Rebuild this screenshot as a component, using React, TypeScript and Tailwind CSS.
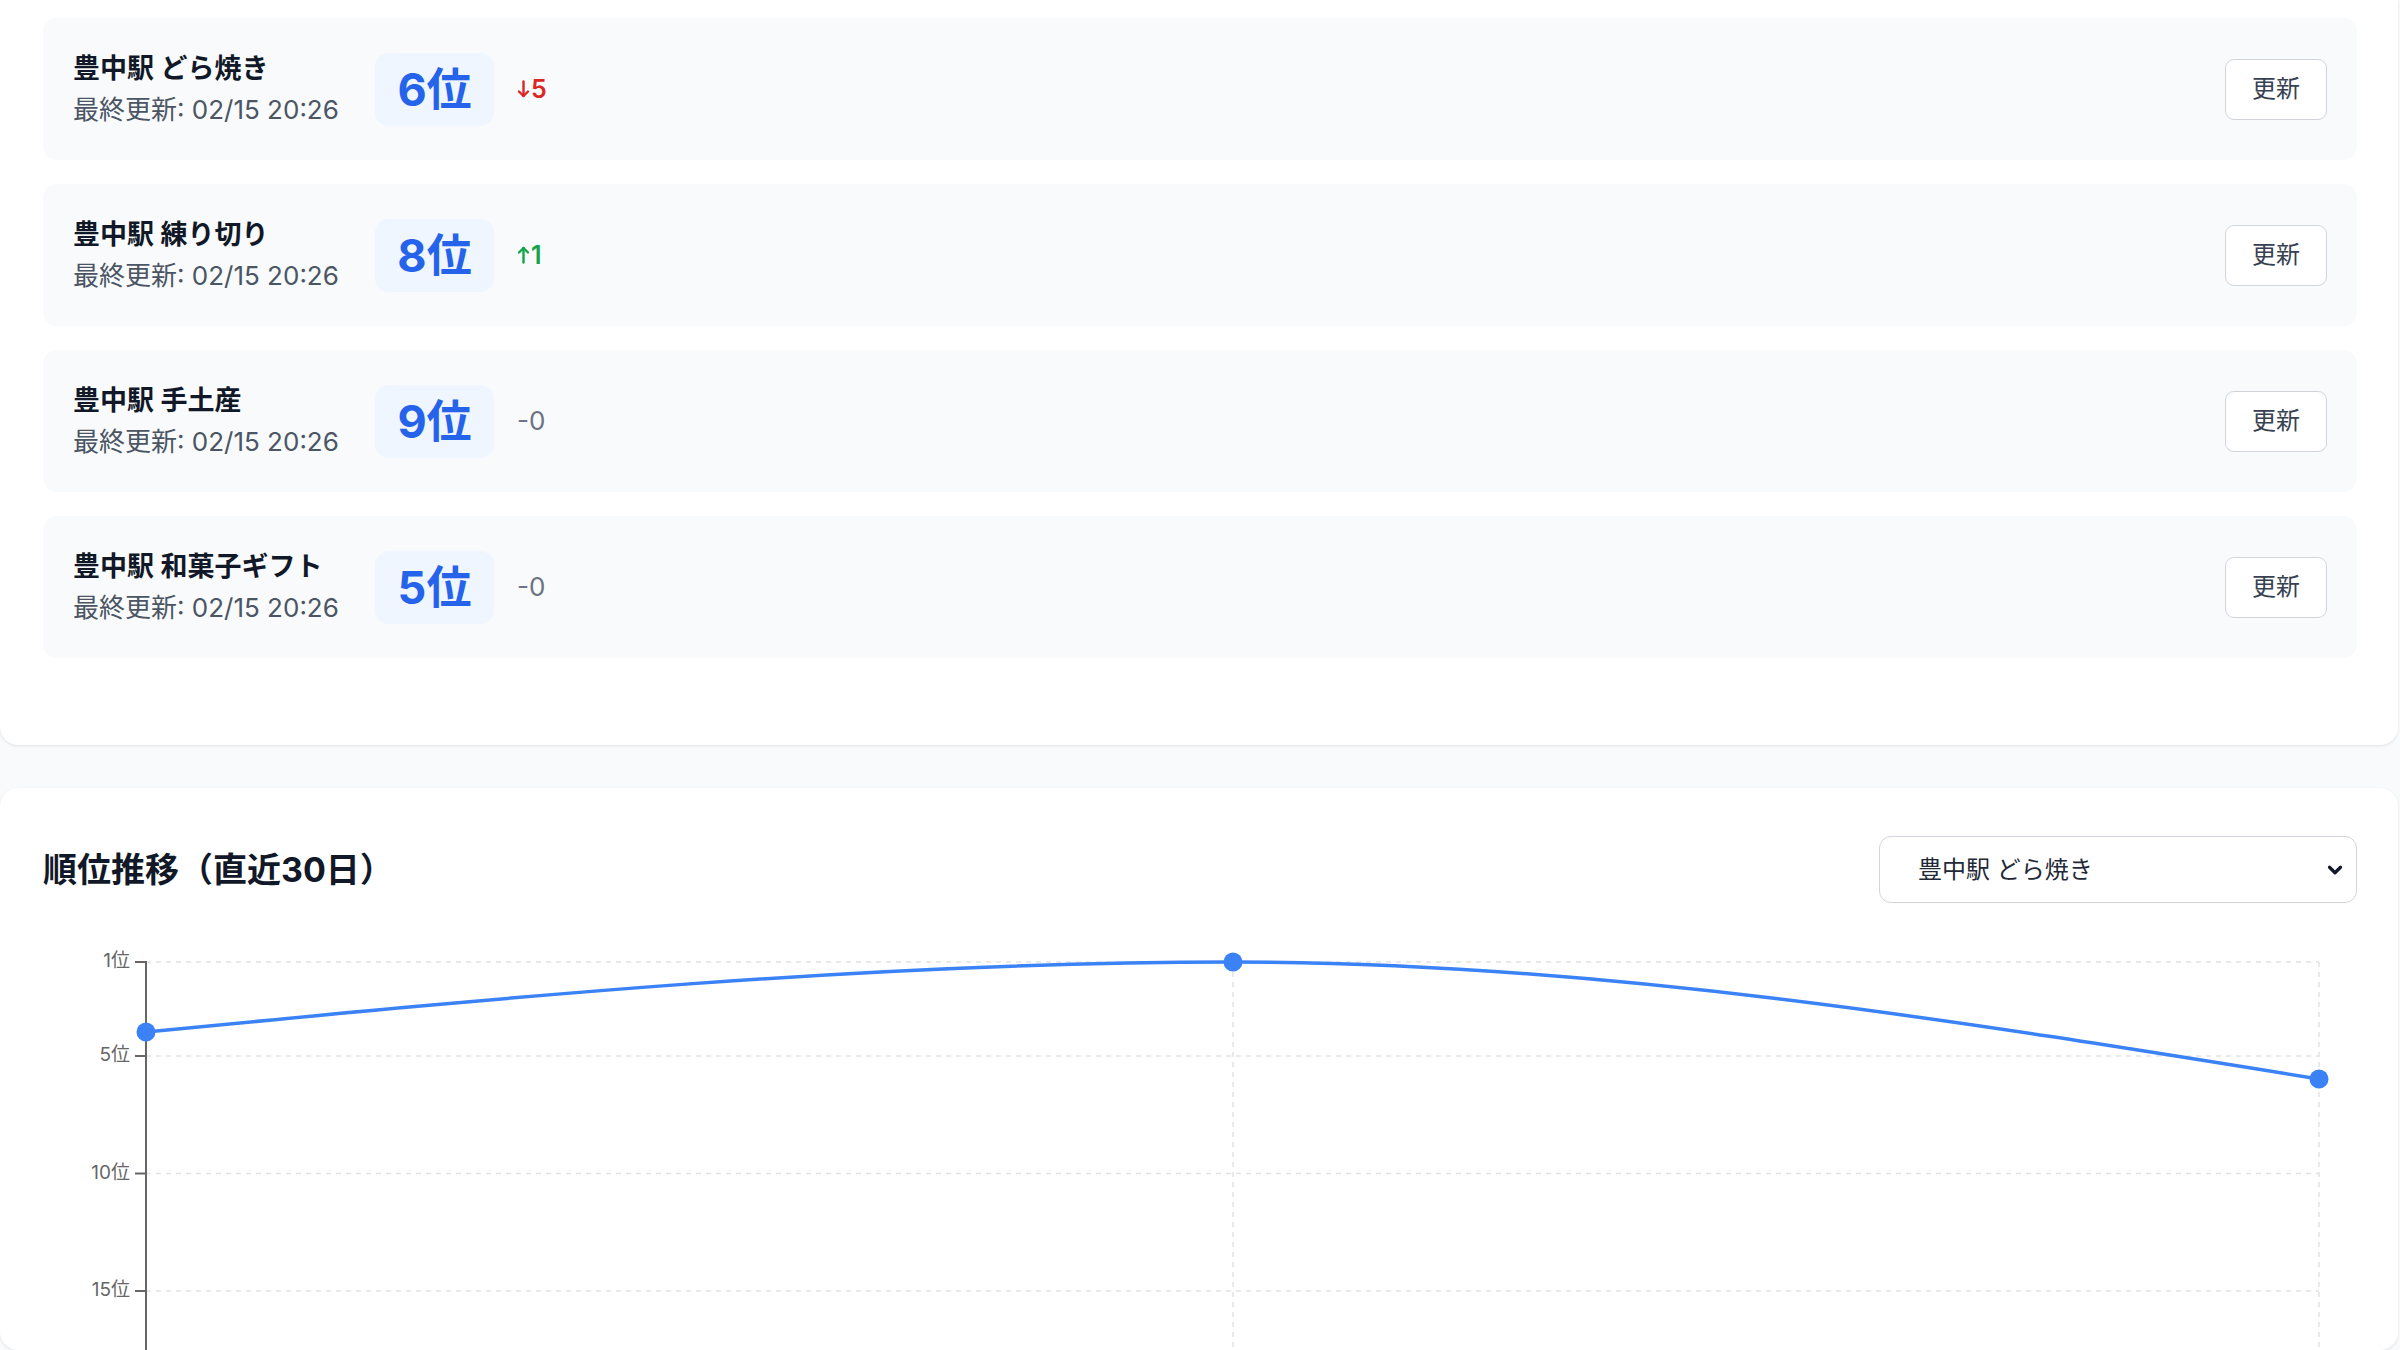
import React from "react";
import { ChevronDown } from "lucide-react";

type Row = { name: string; rank: number; change: number };

const rows: Row[] = [
  { name: "豊中駅 どら焼き", rank: 6, change: -5 },
  { name: "豊中駅 練り切り", rank: 8, change: 1 },
  { name: "豊中駅 手土産", rank: 9, change: 0 },
  { name: "豊中駅 和菓子ギフト", rank: 5, change: 0 },
];

function Arrow({ down }: { down: boolean }) {
  return (
    <svg width="13" height="18" viewBox="0 0 13 18" className={down ? "" : "rotate-180"} fill="none" stroke="currentColor" strokeWidth={2.4} strokeLinecap="round" strokeLinejoin="round">
      <line x1="6.5" y1="1.5" x2="6.5" y2="16" />
      <polyline points="2,11.5 6.5,16 11,11.5" />
    </svg>
  );
}

function Change({ v }: { v: number }) {
  if (v < 0)
    return (
      <div className="flex items-center gap-[1px] text-[#dc2626] text-[25px] font-semibold leading-none">
        <Arrow down />
        <span>{Math.abs(v)}</span>
      </div>
    );
  if (v > 0)
    return (
      <div className="flex items-center gap-[1px] text-[#16a34a] text-[25px] font-semibold leading-none">
        <Arrow down={false} />
        <span>{v}</span>
      </div>
    );
  return <div className="text-[#6b7280] text-[26px] leading-none">-0</div>;
}

function RankRow({ r }: { r: Row }) {
  return (
    <div className="h-[142px] rounded-[14px] bg-[#f8fafc] flex items-center px-[30px]">
      <div className="w-[302px] shrink-0">
        <div className="text-[27px] leading-[36px] font-bold text-[#111827]">{r.name}</div>
        <div className="mt-[5px] text-[26px] leading-[36px] text-[#4b5563]">最終更新: 02/15 20:26</div>
      </div>
      <div className="w-[119px] h-[73px] rounded-[14px] bg-[#eff6ff] flex items-center justify-center text-[45px] font-bold text-[#2563eb] leading-none">
        {r.rank}位
      </div>
      <div className="ml-[23px]">
        <Change v={r.change} />
      </div>
      <button className="ml-auto w-[102px] h-[61px] rounded-[9px] border-[1.5px] border-[#d1d5db] bg-white text-[24px] text-[#374151] flex items-center justify-center">
        更新
      </button>
    </div>
  );
}

const K = 23.5;
const yOf = (rank: number) => 32 + (rank - 1) * K;

function Chart() {
  const ticks = [1, 5, 10, 15];
  const xs = [103, 1190, 2276];
  return (
    <svg width="2312" height="420" viewBox="0 0 2312 420" className="block">
      {ticks.map((t) => (
        <line key={"h" + t} x1={103} x2={2276} y1={yOf(t)} y2={yOf(t)} stroke="#e2e2e2" strokeWidth={1.5} strokeDasharray="5 5" />
      ))}
      {xs.slice(1).map((x) => (
        <line key={"v" + x} x1={x} x2={x} y1={32} y2={420} stroke="#e2e2e2" strokeWidth={1.5} strokeDasharray="5 5" />
      ))}
      <line x1={103} x2={103} y1={31} y2={420} stroke="#666" strokeWidth={2} />
      {ticks.map((t) => (
        <g key={"t" + t}>
          <line x1={92} x2={103} y1={yOf(t)} y2={yOf(t)} stroke="#666" strokeWidth={2} />
          <text x={87} y={yOf(t)} textAnchor="end" dominantBaseline="middle" fontSize={19} fill="#666" fontFamily="Inter, 'Noto Sans CJK JP', sans-serif">
            {t}位
          </text>
        </g>
      ))}
      <path d="M103,102 C465.3,67 827.7,32 1190,32 C1552,32 1914,90.5 2276,149" fill="none" stroke="#3b82f6" strokeWidth={3.5} />
      <circle cx={103} cy={102} r={9.5} fill="#3b82f6" />
      <circle cx={1190} cy={32} r={9.5} fill="#3b82f6" />
      <circle cx={2276} cy={149} r={9.5} fill="#3b82f6" />
    </svg>
  );
}

export default function App() {
  return (
    <div className="h-[1350px] overflow-hidden bg-[#f9fafb] font-['Inter','Noto_Sans_CJK_JP',sans-serif]">
      <div className="mr-[2px]">
        <div className="bg-white rounded-b-[18px] shadow-[0_1px_3px_rgba(0,0,0,0.1)] pt-[18px] pb-[87px] pl-[43px] pr-[41px] flex flex-col gap-[24px]">
          {rows.map((r) => (
            <RankRow key={r.name} r={r} />
          ))}
        </div>
        <div className="mt-[43px] bg-white rounded-[18px] shadow-[0_1px_3px_rgba(0,0,0,0.1)] pt-[48px] pl-[43px] pr-[41px]">
          <div className="flex items-center justify-between h-[67px]">
            <div className="text-[34px] font-bold text-[#111827]">順位推移（直近30日）</div>
            <div className="w-[478px] h-[67px] rounded-[12px] border-[1.5px] border-[#d1d5db] bg-white flex items-center pl-[38px] pr-[10px] text-[24px] text-[#1f2937]">
              <span>豊中駅 どら焼き</span>
              <ChevronDown className="ml-auto" size={22} strokeWidth={3.5} color="#111827" />
            </div>
          </div>
          <div className="mt-[27px]">
            <Chart />
          </div>
        </div>
      </div>
    </div>
  );
}
